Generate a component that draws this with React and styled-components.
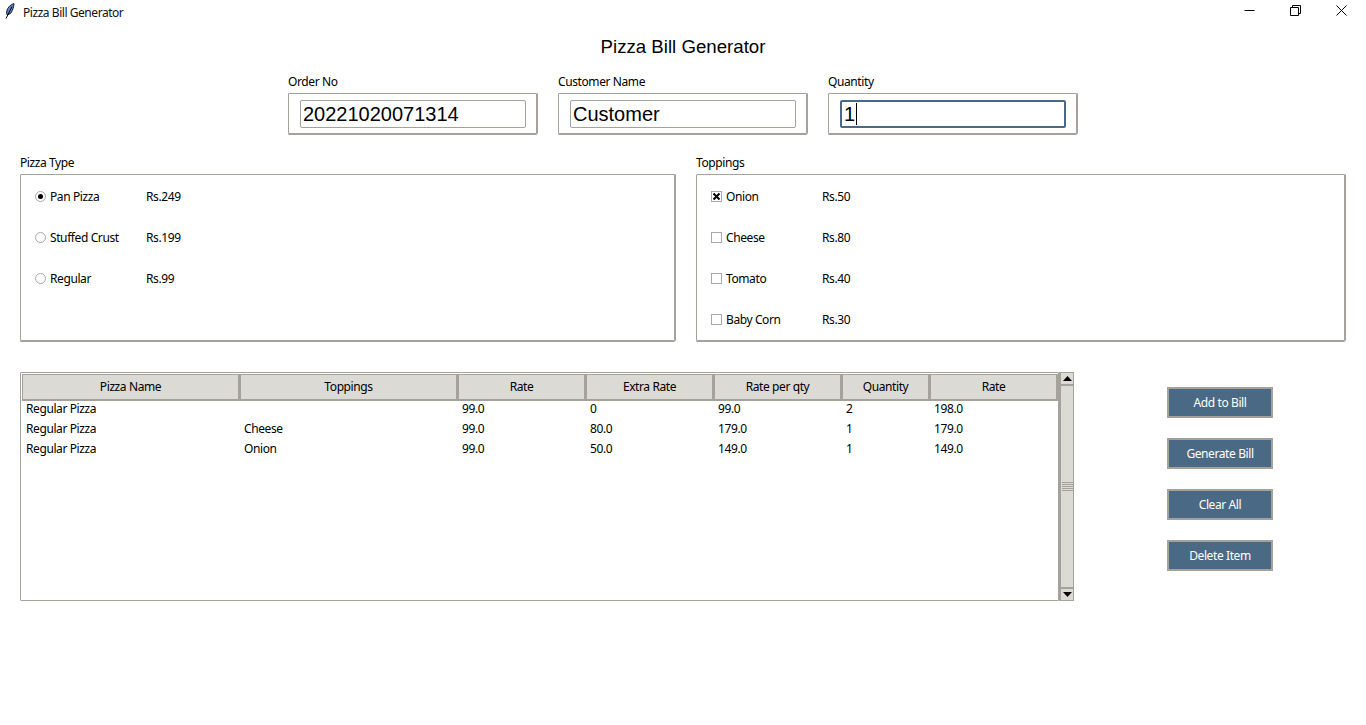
import styled, { createGlobalStyle } from "styled-components";

const Global = createGlobalStyle`
html, body {
  margin: 0;
  padding: 0;
  background: #fff;
  overflow: hidden;
}
* { box-sizing: border-box; }
`;

const Win = styled.div`
  width: 1366px;
  height: 725px;
  background: #fff;
  font-family: "Noto Sans", "Liberation Sans", sans-serif;
  font-size: 12px;
  letter-spacing: -0.4px;
  color: #000;
`;

const TitleBar = styled.div`
  height: 24px;
  display: flex;
  align-items: center;
  padding-left: 5px;
`;

const TitleIcon = styled.svg`
  width: 10px;
  height: 16px;
  margin-bottom: 3px;
  flex: none;
`;

const TitleText = styled.span`
  margin-left: 8px;
  font-size: 12px;
  letter-spacing: -0.45px;
  color: #111;
`;

const WinButtons = styled.div`
  margin-left: auto;
  display: flex;
  margin-right: 2px;
  align-self: flex-start;
`;

const WinBtn = styled.div`
  width: 46px;
  height: 21px;
  display: flex;
  align-items: center;
  justify-content: center;
`;

const Heading = styled.h1`
  margin: 12px 0 0;
  height: 22px;
  font-family: "Liberation Sans", Arial, sans-serif;
  font-weight: 400;
  font-size: 18.67px;
  letter-spacing: 0;
  line-height: 22px;
  text-align: center;
`;

const TopRow = styled.div`
  display: flex;
  justify-content: center;
  gap: 20px;
  margin-top: 16px;
`;

const Label = styled.div`
  height: 17px;
  line-height: ${(p) => p.$lh}px;
  font-size: 12px;
`;

const Field = styled.div`
  width: 250px;
`;

const Frame = styled.div`
  border: 1px solid #a5a29b;
  border-radius: 1px;
  margin-right: 1px;
  box-shadow: 0 1px 0 #a5a29b, 1px 0 0 #a5a29b;
`;

const FieldFrame = styled(Frame)`
  height: 41px;
  margin-top: 2px;
  padding: 6px 11px;
`;

const Input = styled.div`
  height: 28px;
  width: 226px;
  border: ${(p) => (p.$focus ? "2px solid #4a6984" : "1px solid #a5a29b")};
  border-radius: 2px;
  padding-left: 2px;
  font-family: "Liberation Sans", Arial, sans-serif;
  font-size: 20px;
  letter-spacing: 0;
  line-height: ${(p) => (p.$focus ? "24px" : "26px")};
  display: flex;
`;

const Caret = styled.span`
  width: 1px;
  height: 22px;
  margin: 1px 0 0 1px;
  background: #000;
`;

const Sections = styled.div`
  display: flex;
  gap: 20px;
  margin: 20px 20px 0;
`;

const Section = styled.div`
  flex: ${(p) => p.$w} 0 ${(p) => p.$w}px;
`;

const OptionsFrame = styled(Frame)`
  margin-top: 3px;
  height: 167px;
  padding: 1px 14px;
`;

const Option = styled.div`
  display: flex;
  align-items: center;
  height: 41px;
`;

const Radio = styled.span`
  width: 11px;
  height: 11px;
  border-radius: 50%;
  border: 1px solid #a9a9a9;
  display: flex;
  align-items: center;
  justify-content: center;
  &::after {
    content: "";
    display: ${(p) => (p.$on ? "block" : "none")};
    width: 5px;
    height: 5px;
    border-radius: 50%;
    background: #000;
  }
`;

const Check = styled.span`
  width: 11px;
  height: 11px;
  border: 1px solid #a9a9a9;
  display: flex;
  align-items: center;
  justify-content: center;
`;

const OptName = styled.span`
  width: 96px;
  margin-left: 4px;
  white-space: nowrap;
`;

const Lower = styled.div`
  display: flex;
  margin: 31px 0 0 20px;
`;

const TableWrap = styled(Frame)`
  width: 1039px;
  height: 229px;
  margin-right: 0;
  padding: 0 0 0 1px;
  overflow: hidden;
  box-shadow: none;
`;

const Cols = "218px 218px 128px 128px 128px 88px 128px";

const HeadRow = styled.div`
  display: grid;
  grid-template-columns: ${Cols};
  height: 25px;
  margin-top: 1px;
`;

const HeadCell = styled.div`
  background: #dcdad5;
  border: 1px solid #a5a29b;
  border-width: 1px 2px 2px 1px;
  text-align: center;
  line-height: 24px;
`;

const Row = styled.div`
  display: grid;
  grid-template-columns: ${Cols};
  height: 20px;
  line-height: 20px;
`;

const Cell = styled.div`
  padding-left: 4px;
  white-space: nowrap;
`;

const ScrollBar = styled.div`
  width: 15px;
  height: 229px;
  background: #dcdad5;
  border: 1px solid #a5a29b;
  border-width: 1px 1px 1px 2px;
  display: flex;
  flex-direction: column;
`;

const ScrollArrow = styled.div`
  height: 13px;
  display: flex;
  align-items: center;
  justify-content: center;
  border-bottom: ${(p) => (p.$top ? "2px solid #a5a29b" : "none")};
  border-top: ${(p) => (p.$top ? "none" : "2px solid #a5a29b")};
  flex: none;
`;

const ScrollThumb = styled.div`
  flex: 1;
  display: flex;
  align-items: center;
  justify-content: center;
`;

const Grip = styled.div`
  width: 11px;
  height: 9px;
  background: repeating-linear-gradient(to bottom, #a5a29b 0 1px, #dcdad5 1px 2px);
`;

const Buttons = styled.div`
  margin: 15px 0 0 93px;
  display: flex;
  flex-direction: column;
  gap: 20px;
`;

const Btn = styled.div`
  width: 106px;
  height: 31px;
  background: #4a6984;
  border: 2px solid #a5a29b;
  color: #fff;
  text-align: center;
  line-height: 27px;
  font-size: 12px;
`;

const Feather = () => (
  <TitleIcon viewBox="0 0 10 16">
    <path d="M9 0.5C5.5 1.5 2.5 4.5 1.8 8C1.5 9.5 1.6 11 2.2 12L5.5 10.5C7.5 8 8.8 4 9 0.5Z" fill="#5f86c4" stroke="#1a1f33" strokeWidth="1" />
    <path d="M7 3.5L1 15.5" stroke="#000" strokeWidth="1" fill="none" />
  </TitleIcon>
);

const pizzas = [
  ["Pan Pizza", "Rs.249", true],
  ["Stuffed Crust", "Rs.199", false],
  ["Regular", "Rs.99", false],
];

const toppings = [
  ["Onion", "Rs.50", true],
  ["Cheese", "Rs.80", false],
  ["Tomato", "Rs.40", false],
  ["Baby Corn", "Rs.30", false],
];

const heads = ["Pizza Name", "Toppings", "Rate", "Extra Rate", "Rate per qty", "Quantity", "Rate"];

const rows = [
  ["Regular Pizza", "", "99.0", "0", "99.0", "2", "198.0"],
  ["Regular Pizza", "Cheese", "99.0", "80.0", "179.0", "1", "179.0"],
  ["Regular Pizza", "Onion", "99.0", "50.0", "149.0", "1", "149.0"],
];

const App = () => {
  return (
    <Win>
      <Global />
      <TitleBar>
        <Feather />
        <TitleText>Pizza Bill Generator</TitleText>
        <WinButtons>
          <WinBtn>
            <svg width="11" height="11" viewBox="0 0 11 11">
              <path d="M0.5 5.5H10.5" stroke="#000" />
            </svg>
          </WinBtn>
          <WinBtn>
            <svg width="11" height="11" viewBox="0 0 11 11">
              <path d="M0.5 2.5H8.5V10.5H0.5Z M2.5 2.5V0.5H10.5V8.5H8.5" stroke="#000" fill="none" />
            </svg>
          </WinBtn>
          <WinBtn>
            <svg width="11" height="11" viewBox="0 0 11 11">
              <path d="M0.5 0.5L10.5 10.5M10.5 0.5L0.5 10.5" stroke="#000" />
            </svg>
          </WinBtn>
        </WinButtons>
      </TitleBar>

      <Heading>Pizza Bill Generator</Heading>

      <TopRow>
        <Field>
          <Label $lh={15}>Order No</Label>
          <FieldFrame>
            <Input>20221020071314</Input>
          </FieldFrame>
        </Field>
        <Field>
          <Label $lh={15}>Customer Name</Label>
          <FieldFrame>
            <Input>Customer</Input>
          </FieldFrame>
        </Field>
        <Field>
          <Label $lh={15}>Quantity</Label>
          <FieldFrame>
            <Input $focus>
              1<Caret />
            </Input>
          </FieldFrame>
        </Field>
      </TopRow>

      <Sections>
        <Section $w={656}>
          <Label $lh={17}>Pizza Type</Label>
          <OptionsFrame>
            {pizzas.map(([name, price, on]) => (
              <Option key={name}>
                <Radio $on={on} />
                <OptName>{name}</OptName>
                <span>{price}</span>
              </Option>
            ))}
          </OptionsFrame>
        </Section>
        <Section $w={650}>
          <Label $lh={17}>Toppings</Label>
          <OptionsFrame>
            {toppings.map(([name, price, on]) => (
              <Option key={name}>
                <Check>
                  {on && (
                    <svg width="9" height="9" viewBox="0 0 9 9">
                      <path d="M1.5 1.5L7.5 7.5M7.5 1.5L1.5 7.5" stroke="#000" strokeWidth="2" />
                    </svg>
                  )}
                </Check>
                <OptName>{name}</OptName>
                <span>{price}</span>
              </Option>
            ))}
          </OptionsFrame>
        </Section>
      </Sections>

      <Lower>
        <TableWrap>
          <HeadRow>
            {heads.map((h, i) => (
              <HeadCell key={i}>{h}</HeadCell>
            ))}
          </HeadRow>
          {rows.map((r, i) => (
            <Row key={i}>
              {r.map((c, j) => (
                <Cell key={j}>{c}</Cell>
              ))}
            </Row>
          ))}
        </TableWrap>
        <ScrollBar>
          <ScrollArrow $top>
            <svg width="9" height="5" viewBox="0 0 9 5">
              <path d="M4.5 0L9 5H0Z" fill="#000" />
            </svg>
          </ScrollArrow>
          <ScrollThumb>
            <Grip />
          </ScrollThumb>
          <ScrollArrow>
            <svg width="9" height="5" viewBox="0 0 9 5">
              <path d="M0 0H9L4.5 5Z" fill="#000" />
            </svg>
          </ScrollArrow>
        </ScrollBar>
        <Buttons>
          <Btn>Add to Bill</Btn>
          <Btn>Generate Bill</Btn>
          <Btn>Clear All</Btn>
          <Btn>Delete Item</Btn>
        </Buttons>
      </Lower>
    </Win>
  );
};

export default App;
